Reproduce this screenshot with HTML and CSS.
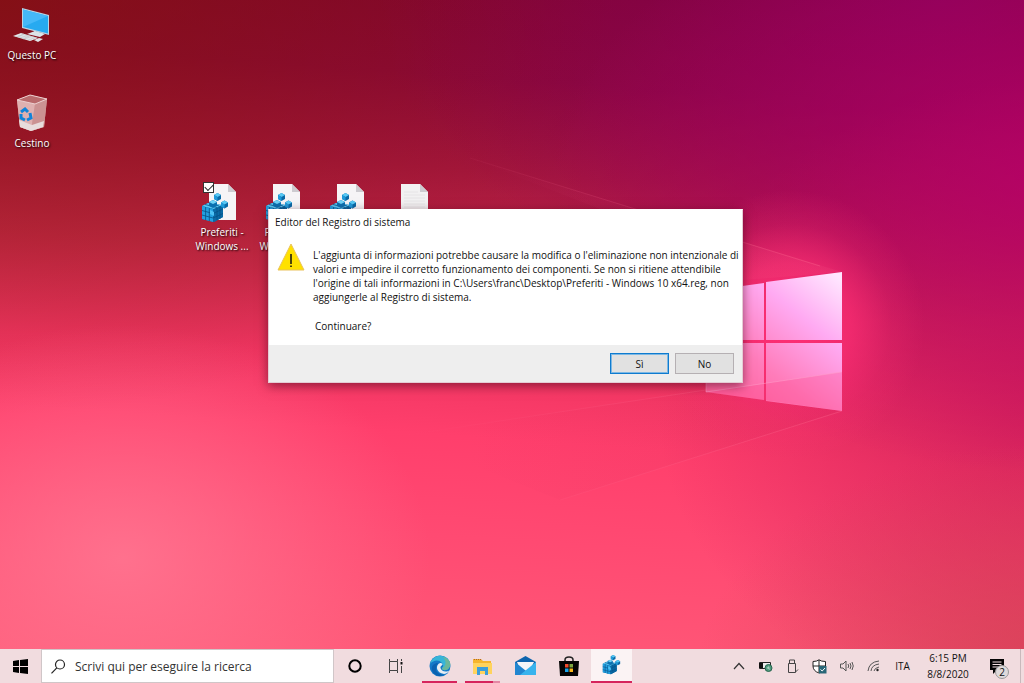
FILE: index.html
```html
<!DOCTYPE html>
<html lang="it">
<head>
    <meta charset="UTF-8">
    <meta name="viewport" content="width=device-width, initial-scale=1.0">
    <title>Editor del Registro di sistema</title>
    <link rel="stylesheet" href="styles.css">
</head>
<body>
    <!-- shared icons -->
    <svg class="defs" width="0" height="0" aria-hidden="true">
        <symbol id="cubes" viewBox="0 0 28 30">
            <path d="M1 13 L7 10 L21 12 L22 24 L13 29 L1 26Z" fill="#0b6aa8"/>
            <path d="M1 13 L7 10 L21 12 L13 16Z" fill="#5cc8f2"/>
            <path d="M1 13 L12 16 V29 L1 26Z" fill="#22a0e0"/>
            <path d="M13 16 L22 12 V24 L13 29Z" fill="#0a6ba6"/>
            <path d="M1 17.500 L12 20.500 L22 16 M1 22 L12 25 L22 20.500 M4.600 14 V27 M8.300 15 V28 M16 15 V27 M19 13.500 V25.500 M4 11.500 L16 14.500 M11 11 L18 13" stroke="#065085" stroke-width=".8" fill="none"/>
            <path d="M9 17 L13 19 V23 L9 21Z" fill="#4cc2f5"/>
            <path d="M8 9 L12 7 L16 9 V13 L12 15 L8 13Z" fill="#0b70b0"/>
            <path d="M8 9 L12 7 L16 9 L12 11Z" fill="#6fd3f7"/>
            <path d="M13 2 L16.500 0 L20 2 V6 L16.500 8 L13 6Z" fill="#0a69a6"/>
            <path d="M13 2 L16.500 0 L20 2 L16.500 4Z" fill="#58c9f5"/>
            <path d="M13 2 L16.500 4 V8 L13 6Z" fill="#1f9bdb"/>
            <path d="M20 9.500 L23.500 7.500 L27 9.500 V13.500 L23.500 15.500 L20 13.500Z" fill="#0a69a6"/>
            <path d="M20 9.500 L23.500 7.500 L27 9.500 L23.500 11.500Z" fill="#58c9f5"/>
            <path d="M20 9.500 L23.500 11.500 V15.500 L20 13.500Z" fill="#1f9bdb"/>
        </symbol>
        <symbol id="regfile" viewBox="0 0 36 40">
            <path d="M8 1 H27 L35 9 V37 H8Z" fill="#f6f4f6"/>
            <path d="M27 1 V9 H35Z" fill="#cdcbd0"/>
            <use href="#cubes" x="0" y="10" width="28" height="30"/>
        </symbol>
    </svg>

    <main class="desktop">
        <svg class="wallpaper" viewBox="0 0 1024 649" preserveAspectRatio="none" aria-hidden="true">
            <defs>
                <linearGradient id="beam" x1="0" y1="0" x2="1" y2="0">
                    <stop offset="0" stop-color="#ff6a90" stop-opacity="0"/>
                    <stop offset="1" stop-color="#ff6a90" stop-opacity=".35"/>
                </linearGradient>
                <linearGradient id="floor" x1="0" y1="0" x2="1" y2="0">
                    <stop offset=".15" stop-color="#d02858" stop-opacity="0"/>
                    <stop offset="1" stop-color="#d02858" stop-opacity=".16"/>
                </linearGradient>
                <linearGradient id="pane" gradientUnits="userSpaceOnUse" x1="730" y1="420" x2="842" y2="280">
                    <stop offset="0" stop-color="#ff5f98"/>
                    <stop offset=".35" stop-color="#ff7cba"/>
                    <stop offset=".7" stop-color="#ffaaf2"/>
                    <stop offset="1" stop-color="#ffe6ff"/>
                </linearGradient>
                <radialGradient id="glow">
                    <stop offset="0" stop-color="#ff2f75" stop-opacity="1"/>
                    <stop offset=".45" stop-color="#ff2f75" stop-opacity=".7"/>
                    <stop offset=".75" stop-color="#ff2f75" stop-opacity=".2"/>
                    <stop offset="1" stop-color="#ff2f75" stop-opacity="0"/>
                </radialGradient>
            </defs>
            <ellipse cx="790" cy="325" rx="135" ry="135" fill="url(#glow)"/>
            <path d="M470 158 L842 272 L743 280 L600 209Z" fill="url(#beam)" opacity=".3"/>
            <path d="M400 436 L706 390 L842 411 L560 500Z" fill="url(#floor)"/>
            <path d="M400 436 L706 390 M560 500 L842 411 M470 158 L820 266" stroke="url(#beam)" fill="none"/>
            <path d="M706 291 L764 283 V340 H706Z M766 282 L842 272 V340 H766Z M706 343 H764 V400 L706 392Z M766 343 H842 V411 L766 401Z" fill="url(#pane)"/>
            <path d="M706 392 L842 372 V411Z" fill="#f9387e" opacity=".24"/>
            <path d="M706 382 V392 L842 372" stroke="#ffa0cc" stroke-opacity=".5" fill="none"/>
        </svg>

        <a class="shortcut pc" href="#">
            <svg width="38" height="36" viewBox="0 0 38 36" aria-hidden="true">
                <path d="M9 0 L36 7 V27 L9 20Z" fill="#b8d4e4"/>
                <path d="M10 1.500 L35 8 V25.500 L10 19Z" fill="#27aaf0"/>
                <path d="M10 1.500 L35 8 L10 19Z" fill="#45b8f8"/>
                <path d="M21 23 L30 25 V27 L21 26Z" fill="#9ab4c0"/>
                <path d="M14 26 L22 23 L32 26 L27 29Z" fill="#dce4e8"/>
                <path d="M0 28 L8 25 L25 30 L17 33Z" fill="#e8ebed"/>
                <path d="M2 28 L19 32 M5 27 L22 31 M8 26 L24 30 M5 29 L11 26 M10 31 L16 28" stroke="#c0c6c9" stroke-width=".7" fill="none"/>
                <path d="M21 32 L26 30 L30 31 L25 34Z" fill="#dfe5e8"/>
            </svg>
            <span>Questo PC</span>
        </a>
        <a class="shortcut bin" href="#">
            <svg width="38" height="38" viewBox="0 0 38 38" aria-hidden="true">
                <path d="M4 6 L17 1 L34 5 L31 33 L18 37 L7 33Z" fill="#d99c9d"/>
                <path d="M4 6 L22 10 L18 37 L7 33Z" fill="#dfb0b0"/>
                <path d="M22 10 L34 5 L31 33 L18 37Z" fill="#cb9292"/>
                <path d="M6 26 L19 31 L31 27 L30 33 L18 37 L7 33Z" fill="#e8dcdc"/>
                <path d="M4 6 L17 1 L34 5 L22 10Z" fill="#b96a6c" stroke="#ecd0d0"/>
                <path d="M8 18 L12 15 L15 18 M17 19 L18 24 L14 26 M12 26 L8 24 V20" stroke="#1183d8" stroke-width="3" fill="none"/>
            </svg>
            <span>Cestino</span>
        </a>

        <a class="shortcut file file-one" href="#">
            <svg width="36" height="40" aria-hidden="true"><use href="#regfile"/></svg>
            <span>Preferiti -<br>Windows ...</span>
        </a>
        <input class="pick" type="checkbox" checked aria-label="Seleziona Preferiti">
        <a class="shortcut file file-two" href="#">
            <svg width="36" height="40" aria-hidden="true"><use href="#regfile"/></svg>
            <span>Preferiti -<br>Windows ...</span>
        </a>
        <a class="shortcut file file-three" href="#" aria-label="File di registro">
            <svg width="36" height="40" aria-hidden="true"><use href="#regfile"/></svg>
        </a>
        <a class="shortcut file file-four" href="#" aria-label="Documento di testo">
            <svg width="36" height="40" viewBox="0 0 36 40" aria-hidden="true">
                <path d="M8 1 H27 L35 9 V37 H8Z" fill="#f2f1f2"/>
                <path d="M27 1 V9 H35Z" fill="#cdcbd0"/>
                <path d="M11 9 H25 M11 12 H32 M11 15 H32 M11 18 H32 M11 21 H32 M11 24 H32" stroke="#e6e4e6"/>
            </svg>
        </a>

        <section class="dialog" role="dialog" aria-labelledby="dialog-title">
            <h1 id="dialog-title">Editor del Registro di sistema</h1>
            <div class="message">
                <svg width="28" height="28" viewBox="0 0 28 28" aria-hidden="true">
                    <path d="M14 1 L27 27 H1Z" fill="#ffe100" stroke="#e9c25c" stroke-linejoin="round"/>
                    <path d="M14 11 V21 M14 22.500 V24" stroke="#111" stroke-width="1.500"/>
                </svg>
                <div class="text">
                    <p>L'aggiunta di informazioni potrebbe causare la modifica o l'eliminazione non intenzionale di<br>valori e impedire il corretto funzionamento dei componenti. Se non si ritiene attendibile<br>l'origine di tali informazioni in C:\Users\franc\Desktop\Preferiti - Windows 10 x64.reg, non<br>aggiungerle al Registro di sistema.</p>
                    <p class="question">Continuare?</p>
                </div>
            </div>
            <div class="actions">
                <button class="primary" type="button">Sì</button>
                <button type="button">No</button>
            </div>
        </section>
    </main>

    <footer class="taskbar">
        <button class="start" type="button" aria-label="Start">
            <svg width="15" height="15" viewBox="0 0 15 15" aria-hidden="true">
                <path d="M0 2 L6 1 V7 H0Z M7 1 L15 0 V7 H7Z M0 8 H6 V14 L0 13Z M7 8 H15 V15 L7 14Z" fill="#000"/>
            </svg>
        </button>
        <label class="search">
            <svg width="15" height="15" viewBox="0 0 15 15" aria-hidden="true">
                <circle cx="9" cy="5.500" r="4.500" fill="none" stroke="#222" stroke-width="1.200"/>
                <path d="M5.800 8.800 L.5 14.300" stroke="#222" stroke-width="1.200"/>
            </svg>
            <input type="text" placeholder="Scrivi qui per eseguire la ricerca" aria-label="Cerca">
        </label>
        <div class="tools">
            <button type="button" aria-label="Cortana">
                <svg width="14" height="14" viewBox="0 0 14 14" aria-hidden="true"><circle cx="7" cy="7" r="5.700" fill="none" stroke="#000" stroke-width="2"/></svg>
            </button>
            <button type="button" aria-label="Visualizzazione attività">
                <svg width="15" height="14" viewBox="0 0 15 14" aria-hidden="true">
                    <path d="M1.500 0 V2.500 H9.500 V0 M1.500 14 V11.500 H9.500 V14 M1.500 2.500 V11.500 M9.500 2.500 V11.500 M13.500 0 V2 M13.500 7 V14" fill="none" stroke="#444"/>
                    <path d="M12.500 3 H14.500 V5.500 H12.500Z" fill="#111"/>
                </svg>
            </button>
        </div>
        <div class="apps">
            <button class="open" type="button" aria-label="Microsoft Edge">
                <svg width="22" height="22" viewBox="0 0 22 22" aria-hidden="true">
                    <circle cx="11" cy="11" r="10.500" fill="#1479c8"/>
                    <path d="M1 9 C3 2 9 0 13 1 C20 2 23 9 20 13 C18 16 13 16 13 13 C14 12 15 10 13 8 C10 4 4 5 1 9Z" fill="#37b5d8"/>
                    <path d="M14 2 C21 4 23 9 20 13 C18 16 13 16 13 13 C17 12 18 6 14 2Z" fill="#6ab79b"/>
                    <path d="M11 8 C6 10 7 18 15 19 C18 19 20 16 21 15 C17 18 12 16 11.500 13 C11 11 14 10 13.500 9 C13 8 12 8 11 8Z" fill="#e8edf2"/>
                    <path d="M8 10 C5 15 9 20 15 19.500 C11 23 4 20 3 15 C2 11 5 8 9 8Z" fill="#0b62b0"/>
                </svg>
            </button>
            <button class="open many" type="button" aria-label="Esplora file">
                <svg width="19" height="17" viewBox="0 0 19 17" aria-hidden="true">
                    <path d="M0 1 H8 L10 3 H18 V16 H0Z" fill="#f5b52e"/>
                    <path d="M0 5 H19 V16 H0Z" fill="#ffd35d"/>
                    <path d="M1 1.500 H8" stroke="#b5652a" stroke-dasharray="1 1"/>
                    <path d="M4 9 H15 V17 H12 V13 H7 V17 H4Z" fill="#3c9edb"/>
                </svg>
            </button>
            <button type="button" aria-label="Posta">
                <svg width="21" height="20" viewBox="0 0 21 20" aria-hidden="true">
                    <path d="M0 6 L10.500 0 L21 6 V19 H0Z" fill="#0e65ae"/>
                    <path d="M2 6 H19 L16 12 L10.500 15 L4 11Z" fill="#f5f6f8"/>
                    <path d="M0 6 L16 19 H0Z" fill="#2186d0"/>
                    <path d="M21 6 L5 19 H21Z" fill="#38b3ed"/>
                </svg>
            </button>
            <button type="button" aria-label="Microsoft Store">
                <svg width="20" height="20" viewBox="0 0 20 20" aria-hidden="true">
                    <path d="M6 6 V4 Q6 1 10 1 Q14 1 14 4 V6" fill="none" stroke="#222" stroke-width="1.500"/>
                    <path d="M0 5 H20 L19 20 H1Z" fill="#050505"/>
                    <path d="M6 8 H9.500 V11.500 H6Z" fill="#ef4a2c"/><path d="M10.500 8 H14 V11.500 H10.500Z" fill="#7da640"/>
                    <path d="M6 12.500 H9.500 V16 H6Z" fill="#16a4ec"/><path d="M10.500 12.500 H14 V16 H10.500Z" fill="#fbb718"/>
                </svg>
            </button>
            <button class="open active" type="button" aria-label="Editor del Registro di sistema">
                <svg width="19" height="20" aria-hidden="true"><use href="#cubes"/></svg>
            </button>
        </div>
        <div class="tray">
            <button type="button" aria-label="Mostra icone nascoste">
                <svg width="12" height="12" viewBox="0 0 12 12"><path d="M1 9 L6 3.500 L11 9" fill="none" stroke="#333" stroke-width="1.200"/></svg>
            </button>
            <button type="button" aria-label="Batteria">
                <svg width="15" height="14" viewBox="0 0 15 14"><path d="M1.500 3.500 H12.500 V9.500 H1.500Z" fill="#eee" stroke="#222"/><path d="M1 4 H5 V9 H1Z" fill="#111"/><circle cx="10.500" cy="9" r="3.500" fill="#4e9a7d" stroke="#28654f"/><path d="M8.500 9 L11 7 L12 11Z" fill="#a6cdbd"/></svg>
            </button>
            <button type="button" aria-label="Rimozione sicura dell'hardware">
                <svg width="12" height="15" viewBox="0 0 12 15"><path d="M2.500 1 H7.500 V4.500 M2.500 1 V4.500 M1.500 4.500 H8.500 V13.500 H1.500Z M8.500 13 L11 10.500" fill="none" stroke="#444"/></svg>
            </button>
            <button type="button" aria-label="Sicurezza di Windows">
                <svg width="15" height="15" viewBox="0 0 15 15"><path d="M1 2.500 Q5 2.500 7 .8 Q9 2.500 13.500 2.500 V7 Q13 12 7 14 Q1 12 1 7Z" fill="#fff" stroke="#222"/><path d="M7 1 V13 M1 7 H13" stroke="#222"/><path d="M7 7 H14.500 V14.500 H7Z" fill="#286777"/><path d="M8.500 10.500 L10.200 12 L13 9" fill="none" stroke="#fff"/></svg>
            </button>
            <button type="button" aria-label="Volume">
                <svg width="14" height="12" viewBox="0 0 14 12"><path d="M.5 4 H3 L6 1 V11 L3 8 H.5Z M8 4 Q9.500 6 8 8 M10 3 Q12 6 10 9 M12 2 Q14.500 6 12 10" fill="none" stroke="#555"/></svg>
            </button>
            <button type="button" aria-label="Rete">
                <svg width="13" height="12" viewBox="0 0 13 12"><path d="M1 11 Q2 2 12 1 M4 11 Q4.500 5 12 4 M7 11 Q7.500 8 12 7" fill="none" stroke="#555"/><circle cx="10.500" cy="10" r="1.200" fill="#222"/></svg>
            </button>
            <button class="lang" type="button">ITA</button>
            <button class="clock" type="button">6:15 PM<br>8/8/2020</button>
            <button class="notice" type="button" aria-label="Centro notifiche">
                <svg width="15" height="15" viewBox="0 0 15 15" aria-hidden="true"><path d="M0 0 H14 V11 H7 L3 15 V11 H0Z" fill="#050505"/><path d="M2.500 3 H11.500 M2.500 5.500 H11.500 M2.500 8 H8" stroke="#f2dfe1"/></svg>
                <span class="badge">2</span>
            </button>
        </div>
    </footer>
</body>
</html>
```
FILE: styles.css
```css
* {
    margin: 0;
    padding: 0;
    box-sizing: border-box;
}

body {
    display: flex;
    flex-direction: column;
    height: 100vh;
    overflow: hidden;
    font-family: 'Open Sans', 'Noto Sans', sans-serif;
    font-size: 10px;
    line-height: 14px;
    color: #111;
}

button,
input {
    font: inherit;
    color: inherit;
    border: none;
    background: none;
}

svg {
    display: block;
    flex-shrink: 0;
}

.defs {
    position: absolute;
}

/* Desktop */
.desktop {
    position: relative;
    flex: 1;
    overflow: hidden;
    background:
        radial-gradient(ellipse 30% 36% at 12% 86%, rgba(255, 124, 150, 0.75), rgba(255, 116, 144, 0)),
        radial-gradient(ellipse 36% 36% at 104% 104%, rgba(208, 66, 82, 0.8), rgba(215, 66, 84, 0)),
        radial-gradient(ellipse 50% 46% at 104% 27%, rgba(184, 0, 106, 0.85), rgba(176, 0, 100, 0)),
        radial-gradient(ellipse 40% 50% at 104% 62%, rgba(204, 28, 88, 0.85), rgba(208, 28, 88, 0)),
        radial-gradient(ellipse 55% 50% at 92% 0%, rgba(136, 0, 92, 0.85), rgba(130, 0, 80, 0)),
        radial-gradient(ellipse 60% 64% at 0% 0%, rgba(130, 22, 0, 0.6), rgba(150, 30, 0, 0)),
        linear-gradient(184deg, #80042f 0%, #8c083a 16%, #a5163e 29%, #c4284a 42%, #f03562 56%, #ff3f6c 66%, #ff4a72 80%, #ff5a78 100%);
}

.wallpaper {
    width: 100%;
    height: 100%;
}

.shortcut {
    position: absolute;
    display: flex;
    flex-direction: column;
    align-items: center;
    gap: 4px;
    width: 64px;
    color: #fff;
    text-align: center;
    text-decoration: none;
    text-shadow: 1px 1px 2px #000;
}

.pc {
    top: 8px;
    left: 0;
}

.bin {
    top: 94px;
    left: 0;
}

.file {
    top: 183px;
    gap: 2px;
}

.file svg {
    margin-right: 6px;
}

.file-one {
    left: 190px;
}

.file-two {
    left: 254px;
}

.file-three {
    left: 318px;
}

.file-four {
    left: 382px;
}

.pick {
    position: absolute;
    top: 182px;
    left: 203px;
    width: 11px;
    height: 11px;
    appearance: none;
    background: #fff;
    border: 1px solid #333;
}

.pick:checked::after {
    content: '';
    display: block;
    width: 7px;
    height: 4px;
    margin: 1px;
    border-left: 1px solid #222;
    border-bottom: 1px solid #222;
    transform: rotate(-45deg);
}

/* Dialog */
.dialog {
    position: absolute;
    top: 209px;
    left: 268px;
    width: 475px;
    background: #fff;
    border: 1px solid #e4ccd4;
    border-top-color: #fff;
    box-shadow: 0 3px 10px rgba(60, 0, 20, 0.55);
}

.dialog h1 {
    padding: 5px 6px;
    font-size: 10px;
    font-weight: normal;
    line-height: 14px;
}

.message {
    display: flex;
    gap: 8px;
    padding: 9px 8px 12px;
}

.text {
    padding-top: 5px;
    white-space: nowrap;
}

.question {
    padding: 15px 2px 0;
}

.actions {
    display: flex;
    justify-content: flex-end;
    gap: 6px;
    padding: 8px;
    background: #eee;
}

.actions button {
    width: 59px;
    height: 21px;
    background: #e1e1e1;
    border: 1px solid #b5b0b3;
}

.actions .primary {
    border-color: #0f7bcf;
    outline: 1px solid #7db8e4;
    outline-offset: -2px;
}

/* Taskbar */
.taskbar {
    display: flex;
    height: 34px;
    background: #f1dcdf;
}

.taskbar button {
    display: flex;
    align-items: center;
    justify-content: center;
}

.start {
    width: 41px;
}

.search {
    display: flex;
    align-items: center;
    gap: 9px;
    width: 293px;
    padding: 0 9px;
    background: #fff;
    border: 1px solid #d0c6c8;
}

.search input {
    flex: 1;
    min-width: 0;
    padding-top: 2px;
    font-size: 12px;
    outline: none;
}

.search input::placeholder {
    color: #333;
}

.tools,
.apps {
    display: flex;
}

.apps {
    gap: 2px;
    margin-left: 3px;
}

.tools button,
.apps button {
    width: 41px;
}

.apps .open {
    background: linear-gradient(#d6245c, #d6245c) center bottom / 35px 2px no-repeat;
}

.apps .many {
    background:
        linear-gradient(90deg, #d6245c 80%, #e487a4 80%) center bottom / 35px 2px no-repeat;
}

.apps .active {
    background: #fbf3f4;
    border-bottom: 2px solid #d6245c;
}

.tray {
    display: flex;
    margin-left: auto;
    margin-right: 3px;
    border-right: 1px solid #c9b9bc;
}

.tray button {
    width: 27px;
}

.tray .lang {
    width: 31px;
}

.tray .clock {
    width: 60px;
    line-height: 16px;
}

.tray .notice {
    position: relative;
    width: 42px;
    padding-right: 4px;
}

.badge {
    position: absolute;
    right: 11px;
    bottom: 4px;
    width: 14px;
    height: 14px;
    font-size: 10px;
    line-height: 12px;
    background: #dedadb;
    border: 1px solid #999;
    border-radius: 50%;
}
```
